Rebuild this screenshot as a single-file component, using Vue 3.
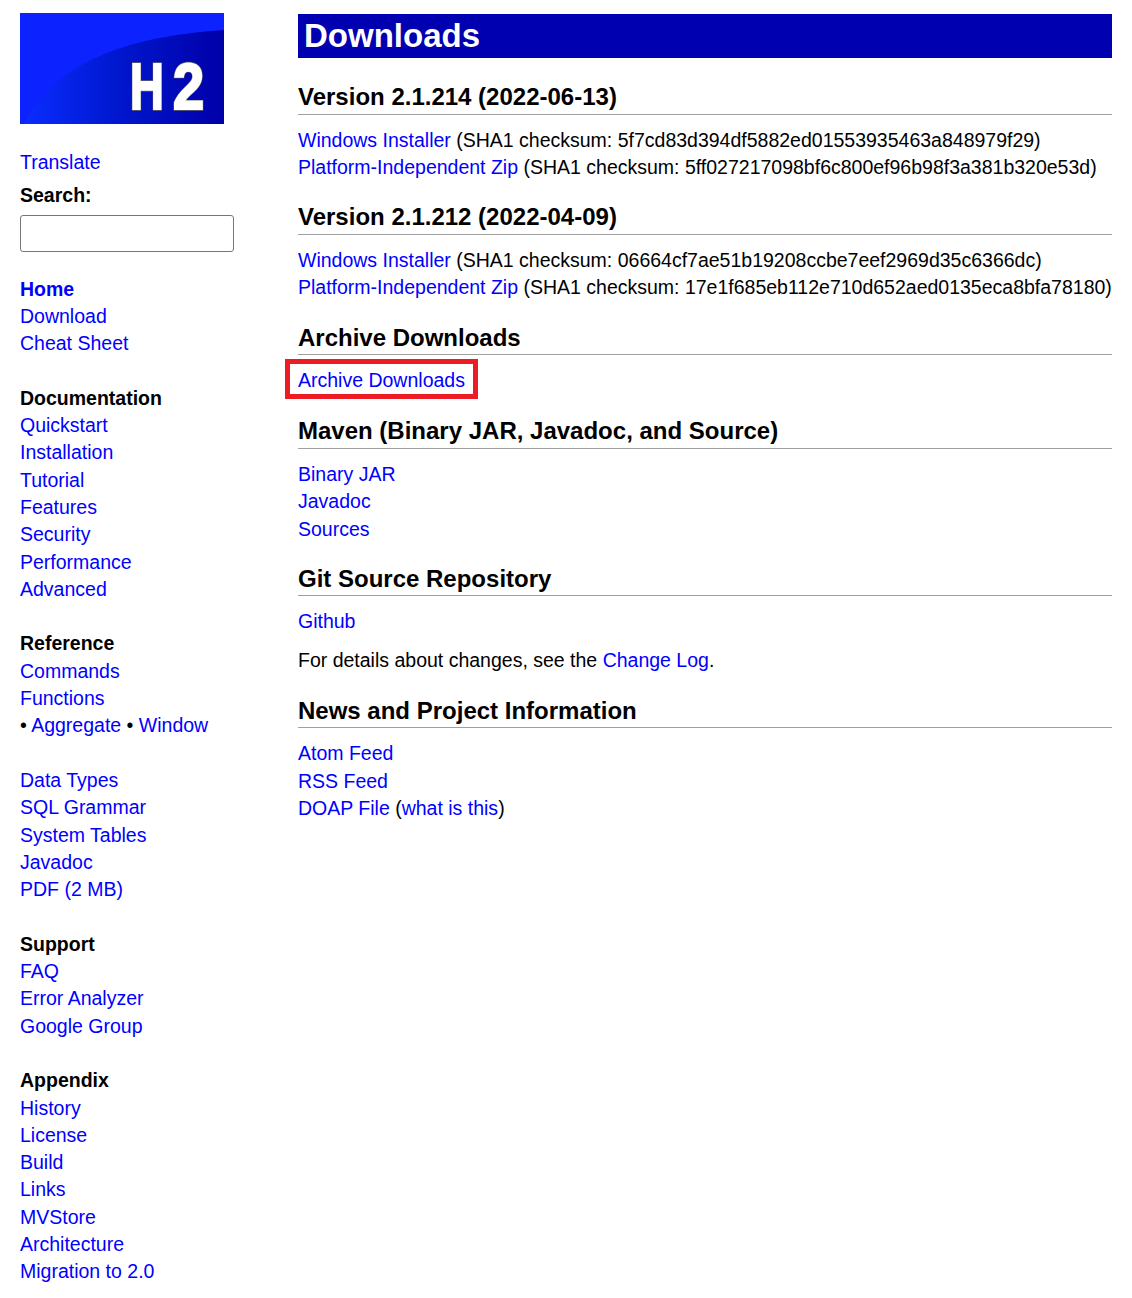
<template>
  <div class="page">
    <aside class="sidebar">
      <svg class="logo" width="204" height="111" viewBox="0 0 204 111">
        <defs>
          <linearGradient id="logoBlue" x1="0" y1="0" x2="1" y2="0">
            <stop offset="0" stop-color="#0a2cff" />
            <stop offset="0.45" stop-color="#0018d0" />
            <stop offset="1" stop-color="#0000a8" />
          </linearGradient>
        </defs>
        <rect width="204" height="111" fill="#0c22ff" />
        <path d="M4 111C34 52 100 24 204 17V111Z" fill="url(#logoBlue)" />
        <g transform="translate(110 96) scale(0.72 1)">
          <text class="logo-text logo-edge">H</text>
          <text class="logo-text">H</text>
        </g>
        <g transform="translate(153 96) scale(0.86 1)">
          <text class="logo-text logo-edge">2</text>
          <text class="logo-text">2</text>
        </g>
      </svg>

      <div class="translate"><a href="#">Translate</a></div>
      <div class="search-label">Search:</div>
      <input class="search" type="text" />

      <nav class="nav">
        <template v-for="(row, index) in navRows" :key="index">
          <div v-if="row.blank" class="nav-row">&nbsp;</div>
          <div v-else-if="row.inline" class="nav-row">
            • <a href="#">Aggregate</a> • <a href="#">Window</a>
          </div>
          <div v-else-if="row.head" class="nav-row nav-head">{{ row.head }}</div>
          <div v-else class="nav-row"><a href="#" :class="{ current: row.current }">{{ row.text }}</a></div>
        </template>
      </nav>
    </aside>

    <main class="content">
      <h1>Downloads</h1>

      <section class="first">
        <h2>Version 2.1.214 (2022-06-13)</h2>
        <p>
          <a href="#">Windows Installer</a> (SHA1 checksum: 5f7cd83d394df5882ed01553935463a848979f29)<br />
          <a href="#">Platform-Independent Zip</a> (SHA1 checksum: 5ff027217098bf6c800ef96b98f3a381b320e53d)
        </p>
      </section>

      <section>
        <h2>Version 2.1.212 (2022-04-09)</h2>
        <p>
          <a href="#">Windows Installer</a> (SHA1 checksum: 06664cf7ae51b19208ccbe7eef2969d35c6366dc)<br />
          <a href="#">Platform-Independent Zip</a> (SHA1 checksum: 17e1f685eb112e710d652aed0135eca8bfa78180)
        </p>
      </section>

      <section class="archive-section">
        <h2 class="low">Archive Downloads</h2>
        <p class="archive">
          <a href="#">Archive Downloads</a>
          <span class="highlight"></span>
        </p>
      </section>

      <section class="maven">
        <h2>Maven (Binary JAR, Javadoc, and Source)</h2>
        <p>
          <a href="#">Binary JAR</a><br />
          <a href="#">Javadoc</a><br />
          <a href="#">Sources</a>
        </p>
      </section>

      <section class="git">
        <h2 class="low">Git Source Repository</h2>
        <p><a href="#">Github</a></p>
        <p class="details">For details about changes, see the <a href="#">Change Log</a>.</p>
      </section>

      <section class="news">
        <h2 class="low">News and Project Information</h2>
        <p>
          <a href="#">Atom Feed</a><br />
          <a href="#">RSS Feed</a><br />
          <a href="#">DOAP File</a> (<a href="#">what is this</a>)
        </p>
      </section>
    </main>
  </div>
</template>

<script setup>
const links = (...names) => names.map((text) => ({ text }))

const navRows = [
  { text: 'Home', current: true },
  ...links('Download', 'Cheat Sheet'),
  { blank: true },
  { head: 'Documentation' },
  ...links('Quickstart', 'Installation', 'Tutorial', 'Features', 'Security', 'Performance', 'Advanced'),
  { blank: true },
  { head: 'Reference' },
  ...links('Commands', 'Functions'),
  { inline: true },
  { blank: true },
  ...links('Data Types', 'SQL Grammar', 'System Tables', 'Javadoc', 'PDF (2 MB)'),
  { blank: true },
  { head: 'Support' },
  ...links('FAQ', 'Error Analyzer', 'Google Group'),
  { blank: true },
  { head: 'Appendix' },
  ...links('History', 'License', 'Build', 'Links', 'MVStore', 'Architecture', 'Migration to 2.0')
]
</script>

<style>
html,
body {
  margin: 0;
  background: #fff;
}
</style>

<style scoped>
.page {
  display: flex;
  width: 1132px;
  height: 1298px;
  overflow: hidden;
  font-family: "Liberation Sans", Arial, sans-serif;
  font-size: 19.5px;
  line-height: 27.3px;
  color: #000;
}

a {
  color: #0000ff;
  text-decoration: none;
}

.sidebar {
  width: 298px;
  flex: none;
  padding: 13px 0 0 20px;
  box-sizing: border-box;
}

.logo {
  display: block;
}

.logo-text {
  font-family: "Liberation Sans", Arial, sans-serif;
  font-size: 65px;
  font-weight: 700;
  fill: #fff;
  stroke: #fff;
  stroke-width: 2.2px;
}

.logo-edge {
  stroke: #666;
  stroke-width: 3.4px;
}

.translate {
  margin-top: 25px;
}

.search-label {
  margin-top: 6px;
  font-weight: 700;
}

.search {
  display: block;
  width: 214px;
  height: 37px;
  margin-top: 5px;
  padding: 0;
  box-sizing: border-box;
  border: 1px solid #767676;
  border-radius: 3px;
  background: #fff;
}

.nav {
  margin-top: 24px;
}

.nav-row {
  height: 27.3px;
  white-space: nowrap;
}

.nav-head,
.current {
  font-weight: 700;
}

.content {
  width: 814px;
  flex: none;
  padding-top: 14px;
}

h1 {
  margin: 0;
  height: 44px;
  padding-left: 6px;
  background: #0000b0;
  color: #fff;
  font-size: 33px;
  line-height: 43px;
  font-weight: 700;
}

section {
  margin-top: 18px;
}

section.first {
  margin-top: 22px;
}

section.archive-section {
  margin-top: 19px;
}

section.maven {
  margin-top: 19.7px;
}

section.git {
  margin-top: 18.3px;
}

section.news {
  margin-top: 19.4px;
}

h2 {
  margin: 0;
  height: 34px;
  border-bottom: 1px solid #a0a0a0;
  font-size: 24px;
  line-height: 34px;
  font-weight: 700;
}

h2.low {
  height: 33px;
  padding-top: 1px;
}

p {
  margin: 12px 0 0;
  white-space: nowrap;
}

.details {
  margin-top: 11px;
}

.archive {
  position: relative;
}

.highlight {
  position: absolute;
  left: -13px;
  top: -8px;
  width: 193px;
  height: 40px;
  box-sizing: border-box;
  border: 5px solid #ed1c24;
}
</style>
